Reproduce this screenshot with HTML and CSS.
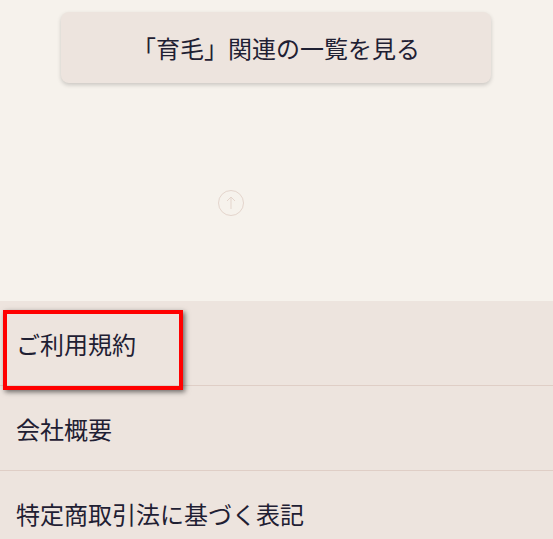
FILE: index.html
```html
<!DOCTYPE html>
<html lang="ja">
<head>
    <meta charset="UTF-8">
    <meta name="viewport" content="width=device-width, initial-scale=1.0">
    <title>育毛 関連</title>
    <link rel="stylesheet" href="styles.css">
</head>
<body>
    <div class="page">
        <div class="more-wrap">
            <a class="more-btn" href="#">「育毛」関連の一覧を見る</a>
        </div>

        <div class="to-top">
            <a class="to-top-btn" href="#" aria-label="ページトップへ">
                <svg width="28" height="28" viewBox="0 0 28 28">
                    <circle cx="14" cy="14" r="12.5" fill="none" stroke="#e4d5cc" stroke-width="1"/>
                    <path d="M14 20V8M10 12l4-4 4 4" fill="none" stroke="#e4d5cc" stroke-width="1"/>
                </svg>
            </a>
        </div>

        <footer class="footer">
            <ul class="footer-links">
                <li class="footer-item is-marked"><a href="#">ご利用規約</a></li>
                <li class="footer-item"><a href="#">会社概要</a></li>
                <li class="footer-item"><a href="#">特定商取引法に基づく表記</a></li>
            </ul>
        </footer>
    </div>
</body>
</html>
```

FILE: styles.css
```css
body {
    margin: 0;
    background: #f6f2ec;
    color: #1f2033;
    font-family: "Noto Sans CJK JP", "Noto Sans", sans-serif;
}

a {
    color: inherit;
    text-decoration: none;
}

.page {
    display: flex;
    flex-direction: column;
}

.more-wrap {
    padding: 12px 62px 0 61px;
}

.more-btn {
    display: flex;
    align-items: center;
    justify-content: center;
    height: 71px;
    background: #ede4de;
    border-radius: 8px;
    box-shadow: 0 2px 4px rgba(0, 0, 0, 0.18);
    font-size: 24px;
}

.to-top {
    display: flex;
    padding: 106px 0 84px 217px;
}

.to-top-btn {
    display: block;
    width: 28px;
    height: 28px;
}

.to-top-btn svg {
    display: block;
}

.footer {
    background: #ede4de;
}

.footer-links {
    list-style: none;
    margin: 0;
    padding: 0;
}

.footer-item {
    position: relative;
    height: 84px;
    display: flex;
    align-items: center;
    padding: 0 16px;
    border-bottom: 1px solid #dfcec6;
    font-size: 24px;
}

.footer-item:last-child {
    border-bottom: none;
}

/* annotation box */
.footer-item.is-marked::after {
    content: "";
    position: absolute;
    left: 3px;
    top: 9px;
    width: 172px;
    height: 72px;
    border: 4px solid #ff0000;
    box-shadow: 2px 2px 5px rgba(0, 0, 0, 0.55);
}
```
